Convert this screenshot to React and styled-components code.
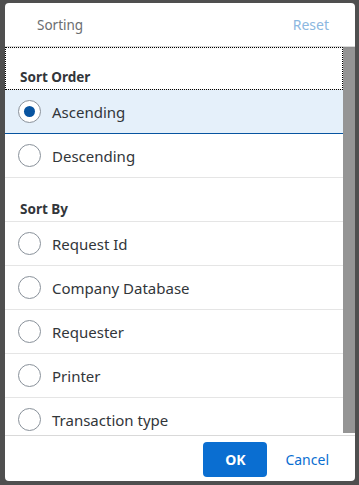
import React from "react";
import styled, { createGlobalStyle } from "styled-components";

const Global = createGlobalStyle`
  html, body { margin: 0; padding: 0; background: #4f4f4f; }
  body { font-family: "Noto Sans", "Liberation Sans", sans-serif; }
`;

const Page = styled.div`
  width: 359px;
  height: 485px;
  padding: 3px 4px 4px 5px;
  box-sizing: border-box;
`;

const Dialog = styled.div`
  width: 350px;
  height: 478px;
  background: #fff;
  border-radius: 4px;
  display: flex;
  flex-direction: column;
  overflow: hidden;
`;

const Header = styled.div`
  height: 43px;
  flex: none;
  display: flex;
  align-items: center;
  justify-content: space-between;
  padding: 0 26px 0 32px;
  box-shadow: 0 1px 0 #d9d9d9, 0 2px 2px rgba(0,0,0,0.08);
  position: relative;
  z-index: 1;
`;

const Title = styled.span`
  font-size: 13.5px;
  color: #6a6d70;
`;

const Reset = styled.span`
  font-size: 14px;
  color: #8cb7e0;
`;

const Body = styled.div`
  flex: 1;
  display: flex;
  min-height: 0;
  margin-top: 1px;
`;

const List = styled.div`
  flex: 1;
  overflow: hidden;
`;

const Scrollbar = styled.div`
  width: 12px;
  background: #959595;
  margin-bottom: 2px;
`;

const GroupHeader = styled.div`
  height: ${p => p.$h}px;
  box-sizing: border-box;
  display: flex;
  align-items: flex-end;
  padding: 0 0 3px 15px;
  font-size: 13.5px;
  font-weight: 700;
  color: #32363a;
  border-bottom: 1px solid #e5e5e5;
  outline: ${p => (p.$focus ? "1px dotted #000" : "none")};
  outline-offset: -1px;
`;

const Row = styled.div`
  height: 44px;
  box-sizing: border-box;
  display: flex;
  align-items: center;
  gap: 11px;
  padding-left: 13px;
  background: ${p => (p.$selected ? "#e5f0fa" : "#fff")};
  border-bottom: 1px solid ${p => (p.$selected ? "#0854a0" : "#e5e5e5")};
  font-size: 15px;
  color: #32363a;
`;

const Radio = styled.span`
  width: 23px;
  height: 23px;
  box-sizing: border-box;
  border-radius: 50%;
  border: 1px solid #89919a;
  background: #fff;
  display: flex;
  align-items: center;
  justify-content: center;
  flex: none;
  &::after {
    content: "";
    display: ${p => (p.$checked ? "block" : "none")};
    width: 11px;
    height: 11px;
    border-radius: 50%;
    background: #0854a0;
  }
`;

const Footer = styled.div`
  height: 45px;
  flex: none;
  border-top: 1px solid #d9d9d9;
  display: flex;
  align-items: center;
  justify-content: flex-end;
  padding: 0 26px 0 0;
  gap: 18px;
`;

const OkButton = styled.button`
  width: 64px;
  height: 35px;
  border: none;
  border-radius: 4px;
  background: #0a6ed1;
  color: #fff;
  font-family: inherit;
  font-weight: 700;
  font-size: 14px;
  margin-top: 2px;
`;

const Cancel = styled.span`
  font-size: 14px;
  color: #0a6ed1;
  margin-top: 2px;
`;

const order = [
  { label: "Ascending", checked: true },
  { label: "Descending" },
];
const by = ["Request Id", "Company Database", "Requester", "Printer", "Transaction type"];

export default function App() {
  return (
    <>
      <Global />
      <Page>
        <Dialog>
          <Header>
            <Title>Sorting</Title>
            <Reset>Reset</Reset>
          </Header>
          <Body>
            <List>
              <GroupHeader $h={43} $focus>Sort Order</GroupHeader>
              {order.map(o => (
                <Row key={o.label} $selected={o.checked}>
                  <Radio $checked={o.checked} />
                  {o.label}
                </Row>
              ))}
              <GroupHeader $h={44}>Sort By</GroupHeader>
              {by.map(l => (
                <Row key={l}>
                  <Radio />
                  {l}
                </Row>
              ))}
            </List>
            <Scrollbar />
          </Body>
          <Footer>
            <OkButton>OK</OkButton>
            <Cancel>Cancel</Cancel>
          </Footer>
        </Dialog>
      </Page>
    </>
  );
}
